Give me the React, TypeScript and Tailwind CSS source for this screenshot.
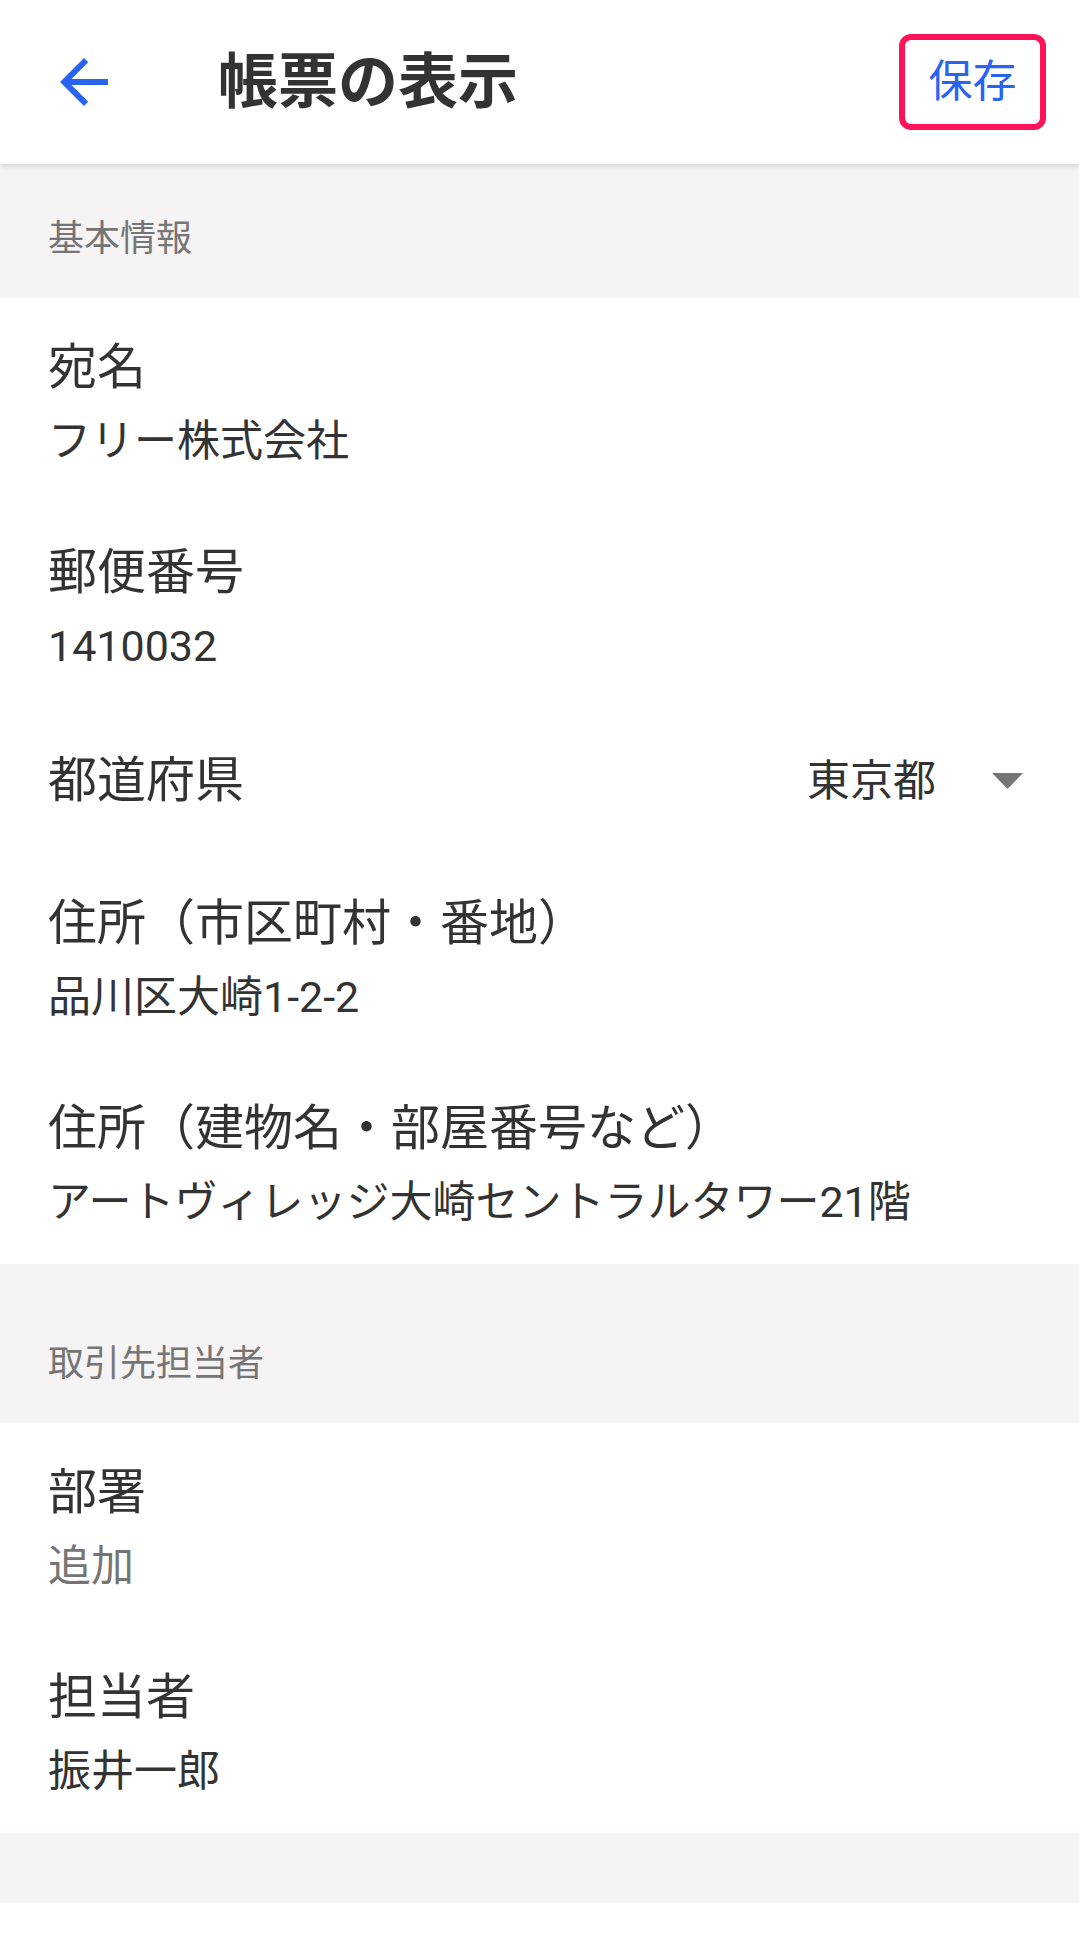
import React from 'react';

interface FieldRowProps {
  label: string;
  value: string;
  placeholder?: boolean;
}

const FieldRow: React.FC<FieldRowProps> = ({ label, value, placeholder }) => (
  <div className="pl-[48px] pr-[48px] pt-[38px] pb-[34px] bg-white">
    <div className="text-[49px] leading-[64px] text-[#333333]">{label}</div>
    <div
      className={`mt-[13px] text-[43px] leading-[56px] ${
        placeholder ? 'text-[#757575]' : 'text-[#333333]'
      }`}
    >
      {value}
    </div>
  </div>
);

const SectionHeader: React.FC<{ title: string; className: string }> = ({ title, className }) => (
  <div className={`bg-[#f5f3f4] pl-[48px] ${className}`}>
    <div className="text-[36px] leading-[48px] text-[#757575]">{title}</div>
  </div>
);

export default function App() {
  return (
    <div className="w-[1079px] min-h-[1939px] bg-white font-['Roboto','Noto_Sans_CJK_JP',sans-serif]">
      {/* App Bar */}
      <header className="relative z-10 h-[164px] bg-white flex items-center shadow-[0_2px_6px_rgba(0,0,0,0.14)]">
        <button className="ml-[48px] w-[72px] h-[72px] flex items-center justify-center" aria-label="戻る">
          <svg width="72" height="72" viewBox="0 0 24 24" fill="#2864f0">
            <path d="M20 11H7.83l5.59-5.59L12 4l-8 8 8 8 1.41-1.41L7.83 13H20v-2z" />
          </svg>
        </button>
        <h1 className="ml-[98px] flex-1 text-[60px] leading-[72px] font-bold text-[#333333] pt-[2px]">
          帳票の表示
        </h1>
        <button className="mr-[33px] w-[147px] h-[96px] rounded-[12px] border-[6px] border-[#ff1358] flex items-center justify-center text-[44px] leading-[56px] text-[#2864f0]">
          保存
        </button>
      </header>

      {/* 基本情報 */}
      <SectionHeader title="基本情報" className="pt-[51px] pb-[35px]" />
      <FieldRow label="宛名" value="フリー株式会社" />
      <FieldRow label="郵便番号" value="1410032" />
      <div className="h-[146px] pl-[48px] pr-[56px] flex items-center bg-white">
        <div className="flex-1 text-[49px] leading-[64px] text-[#333333]">都道府県</div>
        <div className="text-[43px] leading-[56px] text-[#333333]">東京都</div>
        <svg className="ml-[56px]" width="31" height="16" viewBox="0 0 31 16">
          <polygon points="0,0 31,0 15.5,16" fill="#757575" />
        </svg>
      </div>
      <FieldRow label="住所（市区町村・番地）" value="品川区大崎1-2-2" />
      <FieldRow label="住所（建物名・部屋番号など）" value="アートヴィレッジ大崎セントラルタワー21階" />

      {/* 取引先担当者 */}
      <SectionHeader title="取引先担当者" className="pt-[76px] pb-[35px]" />
      <FieldRow label="部署" value="追加" placeholder />
      <FieldRow label="担当者" value="振井一郎" />

      <div className="h-[70px] bg-[#f5f3f4]" />
    </div>
  );
}
